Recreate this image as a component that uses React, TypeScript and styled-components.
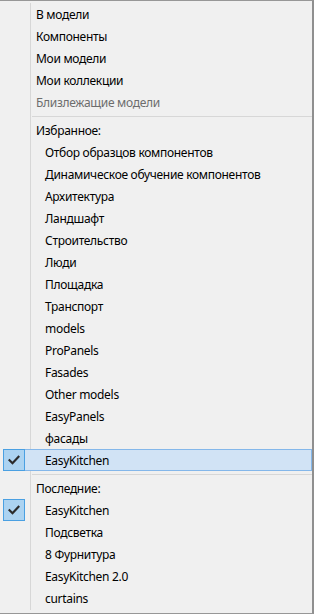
import React from "react";
import styled, { createGlobalStyle } from "styled-components";

const Global = createGlobalStyle`
  html, body { margin: 0; padding: 0; background: #f0f0f0; }
  * { box-sizing: border-box; }
`;

const Menu = styled.div`
  position: relative;
  width: 314px;
  height: 614px;
  background: #f0f0f0;
  border-top: 1px solid #979797;
  border-right: 2px solid #8f8f8f;
  border-bottom: 1px solid #979797;
  padding: 2px 0 4px 3px;
  font-family: "Segoe UI", "Noto Sans", "DejaVu Sans", sans-serif;
  font-size: 12px;
  letter-spacing: -0.3px;
  color: #000;
  &::before {
    content: "";
    position: absolute;
    left: 30px;
    top: 2px;
    bottom: 3px;
    width: 1px;
    background: #d7d7d7;
  }
`;

const Row = styled.div<{ $indent?: boolean; $disabled?: boolean; $hot?: boolean }>`
  position: relative;
  z-index: 1;
  display: flex;
  align-items: center;
  height: 22px;
  padding-left: ${(p) => (p.$indent ? 41 : 32)}px;
  padding-top: 1px;
  color: ${(p) => (p.$disabled ? "#6d6d6d" : "#000")};
  background: ${(p) => (p.$hot ? "#d1e3f5" : "transparent")};
  border: 1px solid ${(p) => (p.$hot ? "#84b7ea" : "transparent")};
  white-space: nowrap;
`;

const Check = styled.span`
  position: absolute;
  left: -1px;
  top: -1px;
  width: 22px;
  height: 22px;
  background: #acd3f1;
  border: 1px solid #4aa0e2;
  display: flex;
  align-items: center;
  justify-content: center;
`;

const Separator = styled.div`
  height: 6px;
  display: flex;
  align-items: center;
  padding-left: 29px;
  &::after {
    content: "";
    flex: 1;
    height: 1px;
    background: #d7d7d7;
  }
`;

const CheckIcon = () => (
  <svg width="12" height="10" viewBox="0 0 12 10">
    <path d="M1.5 5.2 L4.5 8.2 L10.5 1.8" fill="none" stroke="#2b2b2b" strokeWidth="2.2" strokeLinecap="square" />
  </svg>
);

const top = ["В модели", "Компоненты", "Мои модели", "Мои коллекции"];
const favs = [
  "Отбор образцов компонентов",
  "Динамическое обучение компонентов",
  "Архитектура",
  "Ландшафт",
  "Строительство",
  "Люди",
  "Площадка",
  "Транспорт",
  "models",
  "ProPanels",
  "Fasades",
  "Other models",
  "EasyPanels",
  "фасады",
];
const recent = ["Подсветка", "8 Фурнитура", "EasyKitchen 2.0", "curtains"];

export default function App() {
  return (
    <>
      <Global />
      <Menu>
        {top.map((t) => (
          <Row key={t}>{t}</Row>
        ))}
        <Row $disabled>Близлежащие модели</Row>
        <Separator />
        <Row>Избранное:</Row>
        {favs.map((t) => (
          <Row key={t} $indent>{t}</Row>
        ))}
        <Row $indent $hot>
          <Check><CheckIcon /></Check>
          EasyKitchen
        </Row>
        <Separator />
        <Row>Последние:</Row>
        <Row $indent>
          <Check><CheckIcon /></Check>
          EasyKitchen
        </Row>
        {recent.map((t) => (
          <Row key={t} $indent>{t}</Row>
        ))}
      </Menu>
    </>
  );
}
